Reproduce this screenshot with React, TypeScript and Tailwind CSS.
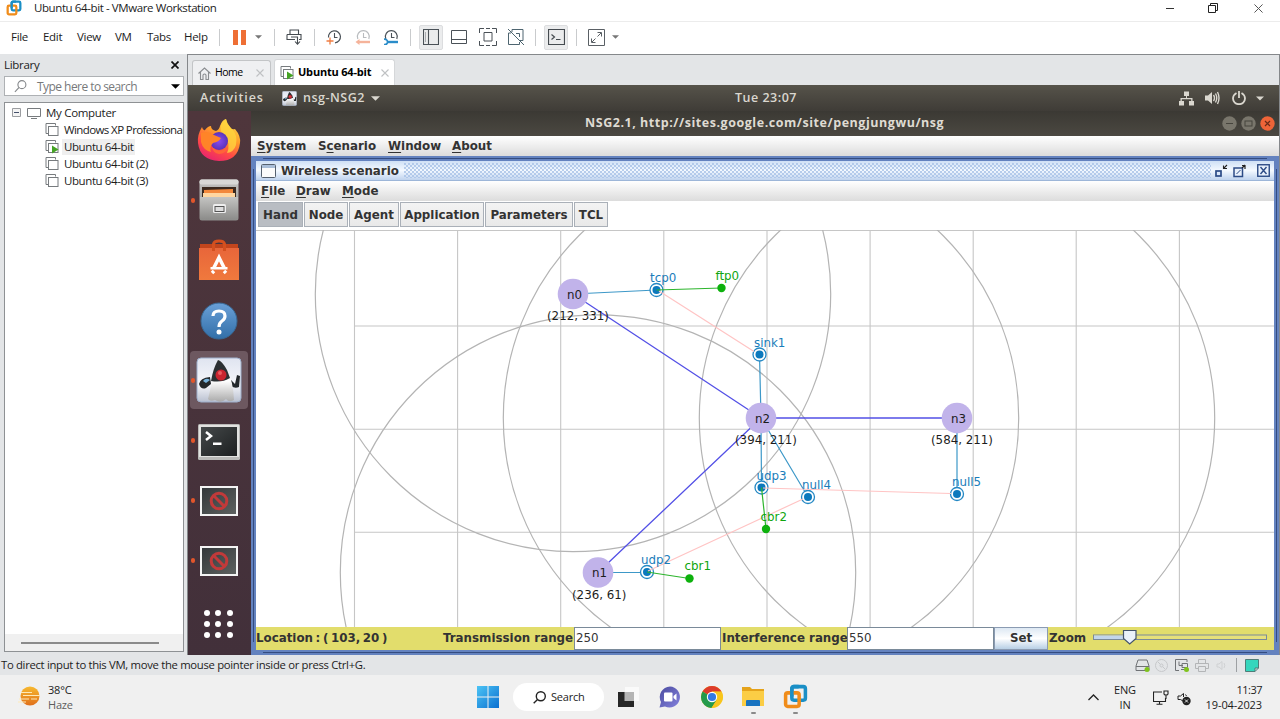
import type { ReactNode } from 'react';

const UI = "font-['Open_Sans','Noto_Sans',sans-serif]";
const JAVA = "font-['DejaVu_Sans',sans-serif]";

function Cell({ w, children }: { w: string; children?: ReactNode }) {
  return <div className={`flex h-full shrink-0 items-center justify-center ${w}`}>{children}</div>;
}

function Sep() {
  return <div className="h-[17px] w-px bg-[#c9cbcd]" />;
}

function Caret({ className }: { className: string }) {
  return (
    <svg viewBox="0 0 8 4" className={className}>
      <path d="M0 0H8L4 4Z" fill="currentColor" />
    </svg>
  );
}

function VmwareLogo({ className }: { className: string }) {
  return (
    <svg viewBox="0 0 24 24" className={className} fill="none" strokeWidth="3.4">
      <rect x="8.5" y="2.5" width="13" height="13" rx="2" stroke="#1a8fc6" />
      <rect x="2.5" y="8.5" width="13" height="13" rx="2" stroke="#f08c1a" />
      <path d="M8.5 12V4.500Q8.500 2.500 10.500 2.500H15" stroke="#1a8fc6" />
    </svg>
  );
}

function ClockIcon({ kind }: { kind: 'add' | 'back' | 'manage' }) {
  const c = kind === 'back' ? '#b9bcbf' : '#4b5258';
  return (
    <svg viewBox="0 0 16 16" className="h-4 w-4" fill="none">
      {kind === 'add' ? (
        <path d="M2.500 8.500A6 6 0 1 1 9 13.800" stroke={c} strokeWidth="1.2" />
      ) : (
        <path d="M2.800 10A6 6 0 1 1 13.800 10" stroke={c} strokeWidth="1.2" />
      )}
      <path d="M8.500 4V8.500H11.500" stroke={c} strokeWidth="1.1" />
      {kind === 'add' && <path d="M0.500 12H7.500M4 8.500V15.500" stroke="#ef7d43" strokeWidth="1.3" />}
      {kind === 'back' && (
        <>
          <path d="M3 13H15" stroke="#f5b39a" strokeWidth="2.400" />
          <path d="M0.500 13L4.500 10V16Z" fill="#f5b39a" />
        </>
      )}
      {kind === 'manage' && (
        <>
          <path d="M4 13H15" stroke="#2a8cc9" strokeWidth="2.400" />
          <path d="M1 10.200Q4.500 10 4.500 13Q4.500 15.800 1 15.600" stroke="#2a8cc9" strokeWidth="1.700" />
        </>
      )}
    </svg>
  );
}

function MenuBar() {
  return (
    <div className="flex h-[33px] shrink-0 items-center border-t border-[#ececec] bg-white pb-[2px] pl-[11px] text-[11.500px] tracking-[-0.3px] text-[#1c1c1c]">
      <div className="w-[32px]">File</div>
      <div className="w-[34px]">Edit</div>
      <div className="w-[38px]">View</div>
      <div className="w-[32px]">VM</div>
      <div className="w-[37px]">Tabs</div>
      <div className="w-[24px]">Help</div>
      <Cell w="w-[22px]"><Sep /></Cell>
      <Cell w="w-[18px]">
        <div className="flex gap-[3px]">
          <div className="h-[15px] w-[5px] bg-[#ee6f35]" />
          <div className="h-[15px] w-[5px] bg-[#ee6f35]" />
        </div>
      </Cell>
      <Cell w="w-[20px]"><Caret className="h-[4px] w-[7px] text-[#777]" /></Cell>
      <Cell w="w-[12px]"><Sep /></Cell>
      <Cell w="w-[28px]">
        <svg viewBox="0 0 16 16" className="h-4 w-4" fill="none" stroke="#454b50" strokeWidth="1.100">
          <path d="M4 5V1H12.500V5M1 5.500H15V10.500H13M9 10.500H1V5.500M4.500 5.500H12.500M5 8H12M11.500 8V15M9 12.500L11.500 15.200L14 12.500" />
        </svg>
      </Cell>
      <Cell w="w-[13px]"><Sep /></Cell>
      <Cell w="w-[26px]"><ClockIcon kind="add" /></Cell>
      <Cell w="w-[31px]"><ClockIcon kind="back" /></Cell>
      <Cell w="w-[26px]"><ClockIcon kind="manage" /></Cell>
      <Cell w="w-[13px]"><Sep /></Cell>
      <Cell w="w-[28px]">
        <div className="flex h-[25px] w-[24px] items-center justify-center rounded-[2px] border border-[#dcdddf] bg-[#ebeced]">
          <svg viewBox="0 0 16 16" className="h-4 w-4" fill="none" stroke="#4a5157">
            <path d="M0.500 0.500H15.500V15.500H0.500ZM5.500 0.500V15.500" strokeWidth="1.100" />
            <path d="M2.500 3V13" strokeWidth="0.800" strokeOpacity="0.500" />
          </svg>
        </div>
      </Cell>
      <Cell w="w-[28px]">
        <svg viewBox="0 0 16 15" className="h-[15px] w-4" fill="none" stroke="#4a5157">
          <path d="M0.500 0.500H15.500V13.500H0.500ZM0.500 9.500H15.500" />
        </svg>
      </Cell>
      <Cell w="w-[29px]">
        <svg viewBox="0 0 18 18" className="h-[18px] w-[18px]" fill="none" stroke="#4a5157">
          <path d="M5 4.500H13V13H5ZM0.500 5V0.500H5M13 0.500H17.500V5M17.500 13V17.500H13M5 17.500H0.500V13M7 0.500H11M7 17.500H11" />
        </svg>
      </Cell>
      <Cell w="w-[27px]">
        <svg viewBox="0 0 18 18" className="h-[18px] w-[18px]" fill="none" stroke="#4e6570">
          <path d="M5 1.500H16V12.500H13M5 1.500V4M1.500 5V16.500H12.500V14M1.500 5H4M9 5.500H12.500V9M1 1L17 17" />
        </svg>
      </Cell>
      <Cell w="w-[13px]"><Sep /></Cell>
      <Cell w="w-[28px]">
        <div className="flex h-[25px] w-[24px] items-center justify-center rounded-[2px] border border-[#dcdddf] bg-[#ebeced]">
          <svg viewBox="0 0 17 16" className="h-4 w-[17px]" fill="none" stroke="#454b50">
            <path d="M0.500 0.500H16.500V15.500H0.500ZM3.500 5.500L6.500 8L3.500 10.500M8 10.500H12.500" strokeWidth="1.200" />
          </svg>
        </div>
      </Cell>
      <Cell w="w-[12px]"><Sep /></Cell>
      <Cell w="w-[28px]">
        <svg viewBox="0 0 17 17" className="h-[17px] w-[17px]" fill="none" stroke="#5a6065">
          <path d="M0.500 0.500H16.500V16.500H0.500ZM4 13L7.500 9.500M9.500 7.500L13 4M9.500 3.500H13.500V7.500M3.500 9.500V13.500H7.500" />
        </svg>
      </Cell>
      <Cell w="w-[11px]"><Caret className="h-[4px] w-[7px] text-[#777]" /></Cell>
    </div>
  );
}

function VmIcon({ running }: { running?: boolean }) {
  return (
    <svg viewBox="0 0 14 14" className="h-[14px] w-[14px] shrink-0" fill="none" stroke="#777b7e">
      <path d="M3 10.500H1V0.500H10.500V2.500" />
      <rect x="3.500" y="3.500" width="9.500" height="9" fill="#fff" />
      {running && <path d="M7 5.500L13.500 9.500L7 13.500Z" fill="#45a324" stroke="none" />}
    </svg>
  );
}

function TreeRow({ label, running, tight }: { label: string; running?: boolean; tight?: boolean }) {
  return (
    <div className={`flex h-[17px] items-center pl-[40px] ${tight ? 'tracking-[-0.600px]' : 'tracking-[-0.400px]'}`}>
      <VmIcon running={running} />
      <span className={running ? 'ml-[3px] bg-[#efefef] px-[2px] leading-[16px]' : 'ml-[5px] leading-[16px]'}>{label}</span>
    </div>
  );
}

function Library() {
  return (
    <div className="flex w-[187px] shrink-0 flex-col bg-[#e3e5e7] pl-[4px] pr-[3px] text-[11.500px] tracking-[-0.3px] text-[#1c1c1c]">
      <div className="flex h-[22px] items-center justify-between pr-[5px]">
        <span>Library</span>
        <svg viewBox="0 0 8 8" className="h-2 w-2" stroke="#111" strokeWidth="1.700"><path d="M0.500 0.500L7.500 7.500M7.500 0.500L0.500 7.500" /></svg>
      </div>
      <div className="flex h-[20px] items-center border border-[#aeb1b4] bg-white pr-[3px] text-[#77797b]">
        <svg viewBox="0 0 14 14" className="ml-[9px] h-[13px] w-[13px]" fill="none" stroke="#85888b" strokeWidth="1.200"><circle cx="8.500" cy="5" r="4.300" /><path d="M5.500 8L1 12.800" /></svg>
        <span className="ml-[10px] grow whitespace-nowrap pt-[2px] tracking-[-0.550px] text-[12px]">Type here to search</span>
        <Caret className="h-[5px] w-[9px] text-black" />
      </div>
      <div className="mb-[3px] mt-[6px] flex grow flex-col overflow-hidden whitespace-nowrap border border-[#8e9194] bg-white pt-[1px]">
        <div className="flex h-[17px] items-center pl-[7px]">
          <svg viewBox="0 0 9 9" className="h-[9px] w-[9px]" fill="#f4f4f4" stroke="#9b9da0"><path d="M0.500 0.500H8.500V8.500H0.500Z" /><path d="M2 4.500H7" stroke="#44506a" /></svg>
          <svg viewBox="0 0 14 12" className="ml-[6px] h-[12px] w-[14px]" fill="none" stroke="#777b7e"><path d="M0.500 1.500H13.500V9.500H0.500ZM4 11.500H10" /></svg>
          <span className="ml-[5px] leading-[16px]">My Computer</span>
        </div>
        <TreeRow label="Windows XP Professional" tight />
        <TreeRow label="Ubuntu 64-bit" running />
        <TreeRow label="Ubuntu 64-bit (2)" />
        <TreeRow label="Ubuntu 64-bit (3)" />
        <div className="mt-auto flex h-[17px] items-center bg-[#f0f0f0] pl-[16px]">
          <div className="h-[2px] w-[138px] bg-[#8b8b8b]" />
        </div>
      </div>
    </div>
  );
}

function TabX() {
  return <svg viewBox="0 0 8 8" className="h-[8px] w-[8px]" stroke="#bfc1c3" strokeWidth="1.100"><path d="M0.500 0.500L7.500 7.500M7.500 0.500L0.500 7.500" /></svg>;
}

function Tabs() {
  return (
    <div className="flex h-[30px] shrink-0 items-end gap-[3px] bg-[#e3e5e7] pl-[4px] text-[11px] text-black">
      <div className="flex h-[25px] w-[79px] items-center rounded-t-[3px] border border-b-0 border-[#c3c5c7] bg-[#eff0f2] pl-[5px] pr-[6px]">
        <svg viewBox="0 0 13 13" className="h-[13px] w-[13px]" fill="none" stroke="#8a8d90" strokeWidth="1.100"><path d="M0.500 6.500L6.500 1L12.500 6.500M2.500 5V12.500H5V8Q6.500 6 8 8V12.500H10.500V5" /></svg>
        <span className="ml-[4px] grow text-[10.500px] tracking-[-0.550px]">Home</span>
        <TabX />
      </div>
      <div className="flex h-[26px] w-[121px] items-center rounded-t-[3px] border border-b-0 border-[#d5d7d9] bg-white pl-[5px] pr-[5px]">
        <VmIcon running />
        <span className="ml-[4px] grow whitespace-nowrap font-bold tracking-[-0.200px]">Ubuntu 64-bit</span>
        <TabX />
      </div>
    </div>
  );
}

function Duke({ className }: { className: string }) {
  return (
    <svg viewBox="0 0 46 46" className={className}>
      <defs>
        <linearGradient id="dk" x1="0" y1="0" x2="0" y2="1"><stop offset="0" stopColor="#dfe4f0" /><stop offset=".6" stopColor="#f6f7fb" /><stop offset="1" stopColor="#b9c0d0" /></linearGradient>
        <linearGradient id="db" x1="0" y1="0" x2="0" y2="1"><stop offset="0" stopColor="#c9c9c9" /><stop offset=".5" stopColor="#fff" /><stop offset="1" stopColor="#aaa" /></linearGradient>
      </defs>
      <rect x="1" y="1" width="44" height="44" rx="4" fill="url(#dk)" stroke="#9fb0cc" />
      <path d="M14 20Q4 21 3 27Q5 33 10 31L15 27ZM35 23L39 27L41 18L44 19L43 30Q39 32 35 29Z" fill="#23282b" />
      <path d="M7 24Q10 20 14 23L10 26Z" fill="#78b3dc" />
      <path d="M22 3Q25 3 31 13Q37 23 38 43Q33 46 30 42Q25 47 19 43Q14 45 12 42Q14 34 16 24Q17 12 22 3Z" fill="url(#db)" />
      <path d="M22 3Q26 4 31 13L34 21Q26 26 15 24Q17 12 22 3Z" fill="#2b3033" />
      <circle cx="25" cy="18" r="5.500" fill="#c9242f" />
      <circle cx="24" cy="16" r="2" fill="#ea5a60" />
    </svg>
  );
}

function GnomeBar() {
  return (
    <div className="flex h-[26px] shrink-0 items-center bg-gradient-to-b from-[#56534a] to-[#3f3c37] pl-[12px] pr-[15px] text-[12.500px] font-semibold tracking-[0.4px] text-[#dad7cf]">
      <span className="w-[82px] shrink-0 tracking-[0.900px]">Activities</span>
      <Duke className="h-[15px] w-[15px] shrink-0" />
      <span className="ml-[6px] w-[68px] shrink-0 tracking-[0.500px]">nsg-NSG2</span>
      <Caret className="h-[5px] w-[9px] shrink-0" />
      <span className="ml-[355px] whitespace-nowrap tracking-[0.500px]">Tue 23:07</span>
      <div className="ml-auto flex items-center">
        <svg viewBox="0 0 15 15" className="h-[15px] w-[15px]" fill="#dad7cf"><path d="M5 0.500H10V5H8V7H13.500V10H15V14.500H10V10H12.200V8.200H2.800V10H5V14.500H0V10H1.500V7H7V5H5Z" /></svg>
        <svg viewBox="0 0 15 14" className="ml-[11px] h-[14px] w-[15px]" fill="none" stroke="#dad7cf" strokeWidth="1.400"><path d="M0 4.500H3L7 1V13L3 9.500H0Z" fill="#dad7cf" stroke="none" /><path d="M8.500 4Q10.500 7 8.500 10M10.500 2.500Q13 7 10.500 11.500M12.500 1Q15.500 7 12.500 13" /></svg>
        <svg viewBox="0 0 14 14" className="ml-[12px] h-[14px] w-[14px]" fill="none" stroke="#dad7cf" strokeWidth="1.800"><path d="M4.500 2Q1 4 1 7.500A6 5.700 0 0 0 13 7.500Q13 4 9.500 2M7 0V7" /></svg>
        <Caret className="ml-[10px] h-[5px] w-[8px]" />
      </div>
    </div>
  );
}

function DockSlot({ dot, children, active }: { dot?: boolean; children: ReactNode; active?: boolean }) {
  return (
    <div className="flex h-[60px] w-[63px] shrink-0 items-center">
      <div className={active ? 'ml-[2px] flex h-[58px] w-[58px] items-center rounded-[4px] bg-[#6d5860]' : 'ml-[2px] flex h-[58px] w-[58px] items-center'}>
        <div className={dot ? 'ml-px h-[5px] w-[4px] rounded-full bg-[#e2562b]' : 'ml-px h-[5px] w-[4px]'} />
        <div className="flex w-[48px] justify-center">{children}</div>
      </div>
    </div>
  );
}

function BlockedIcon() {
  return (
    <svg viewBox="0 0 38 30" className="mt-[2px] h-[30px] w-[38px]">
      <defs><linearGradient id="bl" x1="0" y1="0" x2="1" y2="1"><stop offset="0" stopColor="#33373a" /><stop offset="1" stopColor="#5e6260" /></linearGradient></defs>
      <rect x="1" y="1" width="36" height="28" fill="url(#bl)" stroke="#f3f3f3" strokeWidth="2" />
      <circle cx="19" cy="15" r="7.800" fill="none" stroke="#c23a3a" strokeWidth="3" />
      <path d="M13.500 9.500L24.500 20.500" stroke="#c23a3a" strokeWidth="3" />
    </svg>
  );
}

function Dock() {
  return (
    <div className="flex w-[63px] shrink-0 flex-col bg-gradient-to-b from-[#4f363c] to-[#42303a]">
      <div className="-mt-px flex flex-col">
        <DockSlot>
          <svg viewBox="0 0 44 44" className="h-[44px] w-[44px]">
            <defs>
              <linearGradient id="ff" x1=".8" y1="0" x2=".3" y2="1"><stop offset="0" stopColor="#ffe14a" /><stop offset=".4" stopColor="#ff9a2a" /><stop offset=".7" stopColor="#ff4a45" /><stop offset="1" stopColor="#e8246f" /></linearGradient>
              <radialGradient id="fp"><stop offset="0" stopColor="#8a4bf0" /><stop offset="1" stopColor="#5a33b8" /></radialGradient>
            </defs>
            <path d="M5 9Q6 13 8 12Q11 8 14 8Q14 12 19 13Q22 12 23 8Q25 2 29 1Q30 6 33 9Q34 12 38 11Q44 18 43 25Q41 43 22 43Q3 42 1 25Q0 17 5 9Z" fill="url(#ff)" />
            <path d="M29 1Q30 6 35 11Q41 17 39 27Q37 34 30 35Q34 26 28 18Q22 14 24 7Q26 3 29 1Z" fill="#ffd43d" fillOpacity=".8" />
            <circle cx="22" cy="23" r="9" fill="url(#fp)" />
            <path d="M4 15Q11 12 17 17L24 20Q22 24 16 25Q12 29 14 34Q6 32 4 24Z" fill="#ff8428" />
            <path d="M15 29Q22 36 31 29Q29 36 22 36Q16 35 15 29Z" fill="#ff6538" />
          </svg>
        </DockSlot>
        <DockSlot dot>
          <svg viewBox="0 0 40 42" className="h-[42px] w-[40px]">
            <defs><linearGradient id="fl" x1="0" y1="0" x2="0" y2="1"><stop offset="0" stopColor="#c4c4c2" /><stop offset="1" stopColor="#8d8d8b" /></linearGradient></defs>
            <rect x=".5" y=".5" width="39" height="41" rx="2.500" fill="url(#fl)" />
            <rect x=".5" y=".5" width="39" height="5" rx="2" fill="#d8d8d6" />
            <rect x="3" y="8" width="34" height="11" fill="#3b2a20" />
            <path d="M5 11L34 10V18H5Z" fill="#f2883c" /><path d="M4 14H36V18H4Z" fill="#ffd6a0" />
            <path d="M1 18H39V40H1Z" fill="url(#fl)" />
            <rect x="14" y="25" width="13" height="9" rx="1.500" fill="#eee" /><rect x="16" y="27.500" width="9" height="5" fill="#ddd" stroke="#555" />
          </svg>
        </DockSlot>
        <DockSlot>
          <svg viewBox="0 0 40 42" className="h-[42px] w-[40px]">
            <defs><linearGradient id="sw" x1="0" y1="0" x2="0" y2="1"><stop offset="0" stopColor="#e8663a" /><stop offset="1" stopColor="#f0793d" /></linearGradient></defs>
            <path d="M1 5H39V10H1Z" fill="#c2451d" /><path d="M0 9H40V41H0Z" fill="url(#sw)" />
            <path d="M14.500 12V5Q15 2 20 2Q25 2 25.500 5V12" fill="none" stroke="#d4501f" strokeWidth="3" />
            <path d="M14.500 29.500L20 18.500L25.500 29.500M13 34L15 32M27 34L25 32" fill="none" stroke="#fff" strokeWidth="3.500" /><path d="M11.500 28H28.500V30.500H11.500Z" fill="#fff" />
          </svg>
        </DockSlot>
        <DockSlot>
          <svg viewBox="0 0 38 38" className="mt-[2px] h-[38px] w-[38px]">
            <defs><linearGradient id="hp" x1="0" y1="0" x2="0" y2="1"><stop offset="0" stopColor="#6aa0d8" /><stop offset="1" stopColor="#326fa8" /></linearGradient></defs>
            <circle cx="19" cy="19" r="18" fill="url(#hp)" stroke="#386894" />
            <path d="M13 14Q13 9 19 9Q25 9 25 14Q25 17 22 19Q19 21 19 25" fill="none" stroke="#fff" strokeWidth="3.200" />
            <circle cx="19" cy="30" r="2.500" fill="#fff" />
          </svg>
        </DockSlot>
        <DockSlot dot active><Duke className="h-[46px] w-[46px]" /></DockSlot>
        <DockSlot dot>
          <svg viewBox="0 0 42 36" className="mt-[3px] h-[36px] w-[42px]">
            <defs><linearGradient id="tm" x1="0" y1="0" x2="1" y2="1"><stop offset="0" stopColor="#45494a" /><stop offset="1" stopColor="#1c1f20" /></linearGradient></defs>
            <rect width="42" height="36" rx="1.500" fill="#b9b9b7" /><rect x="1" y="1" width="40" height="32" fill="#e2e2e0" />
            <rect x="3" y="3" width="36" height="29" fill="url(#tm)" />
            <path d="M8 8L13 12L8 16" fill="none" stroke="#fff" strokeWidth="2.500" /><path d="M15 18.500H23.500V21H15Z" fill="#fff" />
          </svg>
        </DockSlot>
        <DockSlot dot><BlockedIcon /></DockSlot>
        <DockSlot dot><BlockedIcon /></DockSlot>
      </div>
      <div className="ml-[16px] mt-[20px] grid w-[29px] grid-cols-3 gap-[5px]">
        {Array.from({ length: 9 }, (_, i) => <div key={i} className="h-[6px] w-[6px] rounded-full bg-white" />)}
      </div>
    </div>
  );
}

function Mnemonic({ k, pre = '', rest }: { k: string; pre?: string; rest: string }) {
  return <span>{pre}<span className="underline decoration-1 underline-offset-2">{k}</span>{rest}</span>;
}

function Tool({ label, w, on }: { label: string; w: string; on?: boolean }) {
  return (
    <div className={`flex h-[25px] shrink-0 items-center justify-center whitespace-nowrap border border-[#aab0b8] pt-[2px] ${w} ${on ? 'bg-[#b9bdc3]' : 'bg-gradient-to-b from-[#f3f3f3] to-[#e9e9e9]'}`}>{label}</div>
  );
}

const nodes = [
  { n: 'n0', x: 573, y: 294, pos: '(212, 331)' },
  { n: 'n1', x: 598, y: 572.500, pos: '(236, 61)' },
  { n: 'n2', x: 761, y: 418, pos: '(394, 211)' },
  { n: 'n3', x: 957, y: 418, pos: '(584, 211)' },
];
const agents = [
  { n: 'tcp0', x: 656.500, y: 290, tx: 650, ty: 282 },
  { n: 'sink1', x: 759.500, y: 354.500, tx: 754, ty: 346.500 },
  { n: 'udp3', x: 761.500, y: 487.500, tx: 756.500, ty: 479.500 },
  { n: 'null4', x: 808, y: 497, tx: 802, ty: 488.500 },
  { n: 'null5', x: 957, y: 494, tx: 952, ty: 486 },
  { n: 'udp2', x: 647, y: 572, tx: 641, ty: 563.500 },
];
const apps = [
  { n: 'ftp0', x: 721.500, y: 288, tx: 715.500, ty: 280 },
  { n: 'cbr2', x: 766, y: 529, tx: 760.500, ty: 520.500 },
  { n: 'cbr1', x: 689.500, y: 578.500, tx: 684.500, ty: 570 },
];

function Diagram() {
  return (
    <svg viewBox="256 230 1018 397" className="block h-[397px] w-[1018px] shrink-0 bg-white" fontFamily="'DejaVu Sans', sans-serif" fontSize="11.850" fontWeight="400">
      <g stroke="#c6c6c6" strokeWidth="1.100">
        <path d="M256 230.500H1274M354 326H1274M354 429.300H1274M354 532.300H1274" />
        {[354.500, 457.600, 560.700, 663.800, 767, 870.100, 973.200, 1076.200, 1179.400].map((x) => <path key={x} d={`M${x} 230V627`} />)}
      </g>
      {nodes.map((n) => <circle key={n.n} cx={n.x} cy={n.y} r="257.700" fill="none" stroke="#b4b4b4" strokeWidth="1.200" />)}
      <path d="M573 294L761 418M761 418L598 572.500M761 418H957" fill="none" strokeWidth="1.300" stroke="#5350e6" />
      <path d="M573 294L656.500 290M759.500 354.500L761 418L761.500 487.500M761 418L808 497M957 418V494M598 572.500H647" fill="none" strokeWidth="1.200" stroke="#3d98c8" />
      {nodes.map((n) => (
        <g key={n.n} fill="#1d1d1d">
          <circle cx={n.x} cy={n.y} r="15.300" fill="#c1b3ea" />
          <text x={n.x - 6} y={n.y + 4.500}>{n.n}</text>
          <text x={n.x - 26} y={n.y + 26}>{n.pos}</text>
        </g>
      ))}
      {agents.map((a) => (
        <g key={a.n}>
          <circle cx={a.x} cy={a.y} r="6.500" fill="#fff" stroke="#2488c4" strokeWidth="1.300" />
          <circle cx={a.x} cy={a.y} r="4" fill="#0c79bd" />
        </g>
      ))}
      <path d="M659 291L754 351.500M763 488L951 493.500M648 571L803 499" stroke="#ffc4c4" strokeWidth="1.200" />
      <path d="M656.500 290L721.500 288M761.500 487.500L766 529M647 572L689.500 578.500" stroke="#2db52d" strokeWidth="1.200" />
      {apps.map((a) => <circle key={a.n} cx={a.x} cy={a.y} r="4.200" fill="#0db10d" />)}
      {agents.map((a) => <text key={a.n} x={a.tx} y={a.ty} fill="#1a7dba">{a.n}</text>)}
      {apps.map((a) => <text key={a.n} x={a.tx} y={a.ty} fill="#0fa50f">{a.n}</text>)}
    </svg>
  );
}

function Field({ value }: { value: string }) {
  return <div className="flex h-[23px] w-[147px] shrink-0 items-center border border-[#7a8a99] bg-white pl-[1px] font-normal">{value}</div>;
}

function InternalFrame() {
  return (
    <div className="flex grow flex-col bg-[#6382bf]">
      <div className="flex h-[5px] shrink-0 items-center px-[12px]"><div className="h-px grow bg-[#344c80]" /></div>
      <div className="flex grow">
        <div className="flex w-[5px] shrink-0 justify-center py-[8px]"><div className="w-px bg-[#344c80]" /></div>
        <div className="flex w-[1018px] shrink-0 flex-col">
          <div className="flex h-[20px] shrink-0 items-center border-b border-[#9db6d8] bg-gradient-to-b from-[#cfe0f5] via-[#f4f9ff] to-[#bfd3ee] pl-[5px] pr-[4px]">
            <svg viewBox="0 0 15 14" className="h-[14px] w-[15px] shrink-0"><rect x=".5" y=".5" width="14" height="13" rx="1" fill="#fbfbfb" stroke="#55606e" /><path d="M1 1H14V4H1Z" fill="#a9bed8" /></svg>
            <span className="ml-[5px] w-[123px] shrink-0 whitespace-nowrap pt-[2px]">Wireless scenario</span>
            <div className="h-[15px] w-[807px] shrink-0 bg-[radial-gradient(circle_at_1px_1px,#a3bfe6_0.6px,transparent_1px),radial-gradient(circle_at_1px_1px,#a3bfe6_0.6px,transparent_1px)] bg-[size:4px_4px] bg-[position:0_0,2px_2px]" />
            <svg viewBox="0 0 13 14" className="ml-[4px] h-[14px] w-[13px] shrink-0" fill="none" stroke="#2c4b86" strokeWidth="1.700"><rect x="1" y="7" width="5" height="5" fill="#dbe8fa" /><path d="M12 1L8.500 4.500M8.500 1.500V4.500H12" stroke="#222" strokeWidth="1.100" /></svg>
            <svg viewBox="0 0 13 14" className="ml-[5px] h-[14px] w-[13px] shrink-0" fill="none" stroke="#2c4b86" strokeWidth="1.500"><rect x="1" y="4" width="8.500" height="8.500" fill="#e8f0fb" /><path d="M3.500 10L7.500 6" strokeWidth="1" /><path d="M9 4L12 1M9 1.500H12V5" stroke="#222" strokeWidth="1.200" /></svg>
            <svg viewBox="0 0 13 13" className="ml-auto h-[13px] w-[13px] shrink-0" fill="#e8f0fb" stroke="#2c4b86" strokeWidth="1.400"><rect x=".75" y=".75" width="11.500" height="11.500" /><path d="M3.500 3L9.500 10M9.500 3L3.500 10" /></svg>
          </div>
          <div className="flex h-[20px] shrink-0 items-center bg-gradient-to-b from-white to-[#dcdcdc] pl-[5px] pt-[2px]">
            <span className="w-[35px]"><Mnemonic k="F" rest="ile" /></span>
            <span className="w-[46px]"><Mnemonic k="D" rest="raw" /></span>
            <Mnemonic k="M" rest="ode" />
          </div>
          <div className="flex h-[29px] shrink-0 items-center gap-px bg-white pb-[2px] pl-[2px]">
            <Tool label="Hand" w="w-[45px]" on />
            <Tool label="Node" w="w-[44px]" />
            <Tool label="Agent" w="w-[50px]" />
            <Tool label="Application" w="w-[84px]" />
            <Tool label="Parameters" w="w-[88px]" />
            <Tool label="TCL" w="w-[34px]" />
          </div>
          <Diagram />
          <div className="flex h-[23px] shrink-0 items-center whitespace-nowrap bg-[#e2dd6c]">
            <span className="w-[187px] [word-spacing:-1.500px]">Location : ( 103, 20 )</span>
            <span className="w-[131px]">Transmission range</span>
            <Field value="250" />
            <span className="ml-px w-[125px]">Interference range</span>
            <Field value="550" />
            <div className="flex h-[23px] w-[54px] shrink-0 items-center justify-center border border-[#8b9bb2] bg-gradient-to-b from-[#dde8f3] via-white to-[#b8cfe5]">Set</div>
            <span className="ml-px w-[44px]">Zoom</span>
            <svg viewBox="0 0 174 16" className="mb-[3px] h-[16px] w-[174px]">
              <rect x=".5" y="6" width="173" height="4.500" fill="#e6e07a" stroke="#7a8a99" />
              <rect x="1" y="6.500" width="35" height="3.500" fill="#c2d6ec" />
              <path d="M30.500 1.500H43V9.500L36.700 15L30.500 9.500Z" fill="#eaf1f9" stroke="#43536a" strokeWidth="1.200" />
            </svg>
          </div>
        </div>
        <div className="flex grow justify-center py-[8px]"><div className="w-px bg-[#344c80]" /></div>
      </div>
      <div className="flex h-[5px] shrink-0 items-center px-[12px]"><div className="h-px grow bg-[#344c80]" /></div>
    </div>
  );
}

function Guest() {
  return (
    <div className="flex h-[570px] w-[1091px] shrink-0 flex-col">
      <GnomeBar />
      <div className="flex grow">
        <Dock />
        <div className={`flex w-[1028px] shrink-0 flex-col text-[11.850px] font-bold text-[#333] ${JAVA}`}>
          <div className="flex h-[25px] shrink-0 items-center bg-gradient-to-b from-[#3b3934] to-[#4b4841] pr-[4px] text-[#dfdbd2]">
            <span className={`ml-[334px] whitespace-nowrap text-[12.500px] tracking-[0.540px] ${UI}`}>NSG2.1, http://sites.google.com/site/pengjungwu/nsg</span>
            <div className="ml-auto flex gap-[4px]">
              <svg viewBox="0 0 15 15" className="h-[15px] w-[15px]"><circle cx="7.500" cy="7.500" r="7.200" fill="#79766c" /><path d="M4 7.500H11" stroke="#46443d" /></svg>
              <svg viewBox="0 0 15 15" className="h-[15px] w-[15px]"><circle cx="7.500" cy="7.500" r="7.200" fill="#79766c" /><rect x="4" y="5" width="7" height="5" fill="none" stroke="#46443d" /></svg>
              <svg viewBox="0 0 15 15" className="h-[15px] w-[15px]"><circle cx="7.500" cy="7.500" r="7.200" fill="#ee6438" /><path d="M5 5L10 10M10 5L5 10" stroke="#6a2b18" strokeWidth="1.200" /></svg>
            </div>
          </div>
          <div className="flex h-[20px] shrink-0 items-center bg-gradient-to-b from-white to-[#dcdcdc] pl-[6px] pt-[2px]">
            <span className="w-[61px]"><Mnemonic k="S" rest="ystem" /></span>
            <span className="w-[70px]"><Mnemonic pre="S" k="c" rest="enario" /></span>
            <span className="w-[64px]"><Mnemonic k="W" rest="indow" /></span>
            <Mnemonic k="A" rest="bout" />
          </div>
          <InternalFrame />
        </div>
      </div>
    </div>
  );
}

function StatusBar() {
  return (
    <div className="flex h-[20px] shrink-0 items-center bg-[#e3e5e7] pl-[1px] pr-[21px] text-[11.300px] tracking-[-0.310px] text-[#1c1c1c]">
      <span className="whitespace-nowrap">To direct input to this VM, move the mouse pointer inside or press Ctrl+G.</span>
      <div className="ml-auto flex items-center">
        <svg viewBox="0 0 15 13" className="h-[13px] w-[15px]" fill="none" stroke="#707376"><path d="M3 1H12L14 7V11.500H1V7ZM1 7.500H14" /><circle cx="12" cy="10.500" r="2.500" fill="#7fc31c" stroke="none" /></svg>
        <svg viewBox="0 0 13 13" className="ml-[5px] h-[13px] w-[13px]" fill="none" stroke="#c6c8ca"><circle cx="6.500" cy="6.500" r="6" /><circle cx="6.500" cy="6.500" r="1.500" /><path d="M3 3L5 5M8 8L10 10" /></svg>
        <svg viewBox="0 0 14 13" className="ml-[7px] h-[13px] w-[14px]" fill="none" stroke="#707376"><path d="M0.500 11.500V0.500H12V3M4 2.500V6.500H8M0.500 11.500H4M7 4.500H12.500V8.500H7ZM6 10.500H9" /><circle cx="11.500" cy="10.500" r="2.500" fill="#7fc31c" stroke="none" /></svg>
        <svg viewBox="0 0 14 13" className="ml-[6px] h-[13px] w-[14px]" fill="none" stroke="#b3b5b7"><path d="M3.500 4V0.500H10.500V4M3 9.500H0.500V4.500H13.500V9.500H11M3.500 7.500H10.500V12.500H3.500Z" /></svg>
        <svg viewBox="0 0 12 11" className="ml-[7px] h-[11px] w-[12px]" fill="none" stroke="#cfd1d3"><path d="M1 4H3L6 1.500V9.500L3 7H1ZM8 3Q9.500 5.500 8 8" /></svg>
        <div className="ml-[8px] h-[14px] w-px bg-[#9da0a3]" />
        <svg viewBox="0 0 14 13" className="ml-[8px] h-[13px] w-[14px]" fill="#35d6bd" stroke="#4f7d78"><path d="M0.500 0.500H13.500V9L10 12.500H0.500ZM13.500 9H10V12.500" /></svg>
      </div>
    </div>
  );
}

function Taskbar() {
  return (
    <div className="flex h-[44px] shrink-0 items-center bg-[#f0f0f0] pl-[18px] pr-[18px] text-[11px] tracking-[-0.2px] text-[#1c1c1c]">
      <svg viewBox="0 0 22 20" className="mt-[-3px] h-[20px] w-[22px]">
        <defs><linearGradient id="wx" x1="0" y1="0" x2="0" y2="1"><stop offset="0" stopColor="#f7b92f" /><stop offset="1" stopColor="#e0701c" /></linearGradient></defs>
        <circle cx="12" cy="10" r="9.500" fill="url(#wx)" />
        <path d="M3 6.500H14M5 9.500H22M1 13H11M13 13H19M0 16H8" stroke="#fde9b8" strokeWidth="1.200" />
      </svg>
      <div className="ml-[8px] w-[60px] leading-[15px]"><div>38°C</div><div className="text-[#5d5d5d]">Haze</div></div>
      <svg viewBox="0 0 22 22" className="ml-[369px] h-[22px] w-[22px] shrink-0">
        <defs><linearGradient id="wn" x1="0" y1="0" x2="1" y2="1"><stop offset="0" stopColor="#4cc4f5" /><stop offset="1" stopColor="#0a6fd0" /></linearGradient></defs>
        <path d="M0 0H10.500V10.500H0ZM11.500 0H22V10.500H11.500ZM0 11.500H10.500V22H0ZM11.500 11.500H22V22H11.500Z" fill="url(#wn)" />
      </svg>
      <div className="ml-[14px] flex h-[28px] w-[91px] shrink-0 items-center rounded-full bg-white pl-[20px]">
        <svg viewBox="0 0 13 13" className="h-[13px] w-[13px]" fill="none" stroke="#222" strokeWidth="1.400"><circle cx="7.800" cy="5.200" r="4.500" /><path d="M4.500 8.500L0.700 12.300" /></svg>
        <span className="ml-[5px]">Search</span>
      </div>
      <svg viewBox="0 0 22 22" className="ml-[14px] h-[22px] w-[22px] shrink-0"><rect x="7" y="1" width="14" height="14" fill="#fafafa" /><path d="M0 6H16V21H0Z" fill="#262626" /><rect x="6.500" y="6" width="9.500" height="9" fill="#b5b5b5" /></svg>
      <svg viewBox="0 0 22 22" className="ml-[19px] h-[22px] w-[22px] shrink-0">
        <defs><linearGradient id="tc" x1="0" y1="0" x2="1" y2="1"><stop offset="0" stopColor="#4b4b9f" /><stop offset="1" stopColor="#8482dd" /></linearGradient></defs>
        <path d="M11 0.500A10.500 10.500 0 1 1 6 20.500L0.500 21.500L2 16A10.500 10.500 0 0 1 11 0.500Z" fill="url(#tc)" /><rect x="5" y="6.500" width="8.500" height="9" rx="1" fill="#fff" /><path d="M14.500 10L17.500 7.500V14.500L14.500 12Z" fill="#fff" />
      </svg>
      <svg viewBox="0 0 22 22" className="ml-[20px] h-[22px] w-[22px] shrink-0">
        <circle cx="11" cy="11" r="11" fill="#f8c51c" />
        <path d="M11 11L1.500 5.500A11 11 0 0 1 20.500 5.500H11Z" fill="#dd3b2b" /><path d="M11 11L1.500 5.500A11 11 0 0 0 10.500 22L15.800 13.800Z" fill="#249a4b" /><path d="M11 5.800H20.600Q22.500 10 21.300 14Q18 21 10.500 22L15.800 13.800Z" fill="#f8c51c" />
        <circle cx="11" cy="11" r="5.200" fill="#fff" /><circle cx="11" cy="11" r="4.100" fill="#3479e4" />
      </svg>
      <div className="ml-[18px] flex h-[36px] w-[24px] shrink-0 flex-col items-center justify-end">
        <svg viewBox="0 0 24 21" className="h-[21px] w-[24px]"><path d="M1 1H9L11 3H23V20H1Z" fill="#e5a31b" /><path d="M1 5H23V20H1Z" fill="#fbcd45" /><path d="M5 20V15Q5 14 6 14H18Q19 14 19 15V20Z" fill="#1873c0" /></svg>
        <div className="mb-px mt-[5px] h-[2px] w-[5px] rounded-full bg-[#8a8a8a]" />
      </div>
      <div className="ml-[17px] flex h-[36px] w-[26px] shrink-0 flex-col items-center justify-end">
        <VmwareLogo className="h-[25px] w-[25px]" />
        <div className="mb-px mt-[3px] h-[2px] w-[5px] rounded-full bg-[#8a8a8a]" />
      </div>
      <div className="ml-auto flex items-center">
        <svg viewBox="0 0 11 7" className="h-[7px] w-[11px]" fill="none" stroke="#222" strokeWidth="1.300"><path d="M0.500 6L5.500 1L10.500 6" /></svg>
        <div className="ml-[13px] w-[26px] text-center leading-[15px]"><div>ENG</div><div>IN</div></div>
        <svg viewBox="0 0 16 15" className="ml-[15px] h-[15px] w-[16px]" fill="none" stroke="#222" strokeWidth="1.100"><path d="M9 2H0.500V11.500H12.500V8M6.500 11.500V14M3.500 14.200H9.500M11 1H15V4Q15 5 13 5Q11 5 11 4ZM13 5V9" /></svg>
        <svg viewBox="0 0 14 14" className="ml-[8px] mt-[3px] h-[14px] w-[14px]" fill="none" stroke="#222"><path d="M6 9L3.500 7.500H1V4H3.500L6.500 1.500V5M8.500 2.500L9.500 4" /><circle cx="9.500" cy="9" r="4.200" fill="#222" stroke="none" /><path d="M8 7.500L11 10.500M11 7.500L8 10.500" stroke="#eee" /></svg>
        <div className="ml-[11px] w-[60px] whitespace-nowrap text-right leading-[15px]"><div className="tracking-[-0.500px]">11:37</div><div className="tracking-[-0.100px]">19-04-2023</div></div>
      </div>
    </div>
  );
}

export default function App() {
  return (
    <div className={`flex h-[719px] w-[1280px] flex-col overflow-hidden bg-white ${UI}`}>
      <div className="flex h-[21px] shrink-0 items-center bg-white pb-[5px] pl-[6px] pr-[17px] text-[11.500px] tracking-[-0.400px] text-[#1c1c1c]">
        <VmwareLogo className="h-[16px] w-[16px]" />
        <span className="ml-[12px] whitespace-nowrap">Ubuntu 64-bit - VMware Workstation</span>
        <div className="ml-auto flex items-center">
          <div className="h-px w-[8px] bg-[#333]" />
          <svg viewBox="0 0 10 10" className="ml-[34px] h-[10px] w-[10px]" fill="none" stroke="#222"><path d="M0.500 2.500H7.500V9.500H0.500ZM2.500 2.500V0.500H9.500V7.500H7.500" /></svg>
          <svg viewBox="0 0 10 10" className="ml-[36px] h-[9px] w-[9px]" fill="none" stroke="#555" strokeWidth="1.100"><path d="M0.500 0.500L9.500 9.500M9.500 0.500L0.500 9.500" /></svg>
        </div>
      </div>
      <MenuBar />
      <div className="flex h-[601px] shrink-0">
        <Library />
        <div className="flex w-[1093px] shrink-0 flex-col border-l border-r border-t border-[#85888b]">
          <Tabs />
          <Guest />
        </div>
      </div>
      <StatusBar />
      <Taskbar />
    </div>
  );
}
